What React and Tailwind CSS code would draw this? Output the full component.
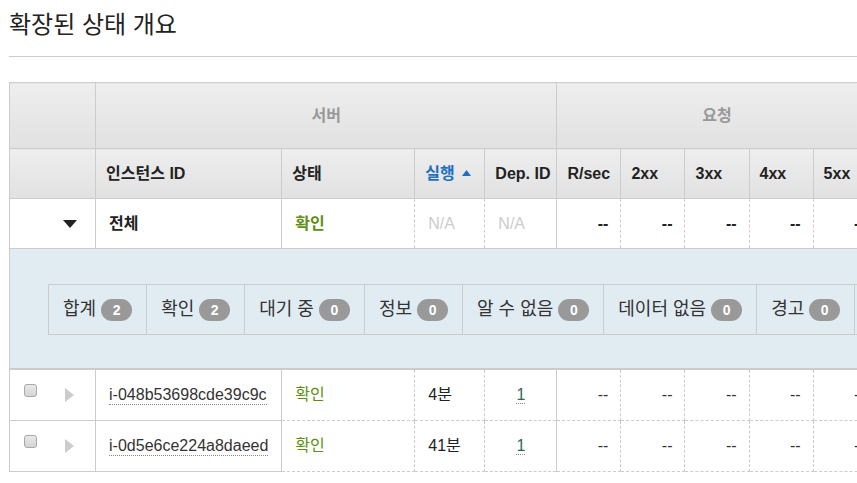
import React from "react";

const FONT = { fontFamily: '"Liberation Sans", "Noto Sans CJK KR", Arial, sans-serif' };

const reqCols = ["R/sec", "2xx", "3xx", "4xx", "5xx"];
const extraCols = ["P99.9", "P99", "P90", "P75"];

const summary = [
  ["합계", 2],
  ["확인", 2],
  ["대기 중", 0],
  ["정보", 0],
  ["알 수 없음", 0],
  ["데이터 없음", 0],
  ["경고", 0],
  ["성능 저하", 0],
  ["심각", 0],
];

const rows = [
  { id: "i-048b53698cde39c9c", up: "4분" },
  { id: "i-0d5e6ce224a8daeed", up: "41분" },
];

function Badge({ n }) {
  return (
    <span className="inline-flex h-[22px] w-[31px] items-center justify-center rounded-full bg-[#999999] text-[14px] font-bold leading-none text-white">
      {n}
    </span>
  );
}

function Checkbox() {
  return (
    <span className="inline-block h-[13px] w-[13px] rounded-[3px] border border-[#a9a9a9] bg-linear-to-b from-[#e9e9e9] to-[#d4d4d4]" />
  );
}

export default function App() {
  const thBase = "border border-[#cccccc] bg-linear-to-b from-[#eeeeee] to-[#e1e1e1] align-middle font-bold whitespace-nowrap";
  const th = thBase + " text-left px-[10px]";
  const thGroup = thBase + " text-center text-[#999999]";
  const dashed = "border-y border-y-[#cccccc] border-x border-x-[#cccccc] border-dashed whitespace-nowrap";
  return (
    <div className="w-full overflow-hidden bg-white text-[#222222]" style={FONT}>
      <div className="ml-[9px] border-b border-[#cccccc] pt-[8px] pb-[14px] text-[24px] leading-[34px] text-[#222222]">
        확장된 상태 개요
      </div>
      <div className="pl-[9px] pt-[25px]">
        <table className="table-fixed border-collapse text-[16px]" style={{ width: 1205 }}>
          <colgroup>
            <col style={{ width: 86 }} />
            <col style={{ width: 186 }} />
            <col style={{ width: 133 }} />
            <col style={{ width: 70 }} />
            <col style={{ width: 72 }} />
            {reqCols.map((c) => (
              <col key={c} style={{ width: 64 }} />
            ))}
            {extraCols.map((c) => (
              <col key={c} style={{ width: 84 }} />
            ))}
          </colgroup>
          <thead>
            <tr className="h-[66px]">
              <th className={thBase}></th>
              <th colSpan={4} className={thGroup}>
                서버
              </th>
              <th colSpan={5} className={thGroup}>
                요청
              </th>
              <th colSpan={4} className={thGroup}>
                지연 시간
              </th>
            </tr>
            <tr className="h-[50px]">
              <th className={thBase}></th>
              <th className={th}>인스턴스 ID</th>
              <th className={th}>상태</th>
              <th className={th + " text-[#1f6fbf]"}>
                <span className="inline-flex items-center gap-[7px]">
                  실행
                  <svg width="9" height="6" viewBox="0 0 9 6" className="mt-[-2px]">
                    <polygon points="0,6 4.5,0 9,6" fill="#1f6fbf" />
                  </svg>
                </span>
              </th>
              <th className={thBase + " text-left pl-[10px] pr-0"}>Dep. ID</th>
              {reqCols.map((c) => (
                <th key={c} className={th}>
                  {c}
                </th>
              ))}
              {extraCols.map((c) => (
                <th key={c} className={th}>
                  {c}
                </th>
              ))}
            </tr>
          </thead>
          <tbody>
            <tr className="h-[50px]">
              <td className="border border-[#cccccc] pr-[18px] text-right align-middle">
                <svg width="14" height="8" viewBox="0 0 14 8" className="ml-auto inline-block">
                  <polygon points="0,0 14,0 7,8" fill="#222222" />
                </svg>
              </td>
              <td className="border border-[#cccccc] px-[13px] font-bold">전체</td>
              <td className={dashed + " px-[13px] font-bold text-[#5f8f12]"}>확인</td>
              <td className={dashed + " px-[13px] text-[#cccccc]"}>N/A</td>
              <td className={dashed + " px-[13px] text-[#cccccc]"} style={{ borderRightStyle: "solid" }}>
                N/A
              </td>
              {reqCols.map((c) => (
                <td key={c} className={dashed + " pr-[12px] text-right font-bold"}>
                  --
                </td>
              ))}
              {extraCols.map((c) => (
                <td key={c} className={dashed + " pr-[12px] text-right font-bold"}>
                  --
                </td>
              ))}
            </tr>
            <tr>
              <td colSpan={14} className="border border-[#cccccc] border-b-2 border-b-[#cccccc] bg-[#e1ebf2] pt-[35px] pb-[33px] pl-[38px]">
                <div className="flex h-[51px]">
                  {summary.map(([label, n], i) => (
                    <div
                      key={label}
                      className={
                        "flex items-center gap-[5px] border-y border-r border-[#cccccc] px-[14px] text-[18px] text-[#333333] " +
                        (i === 0 ? "border-l" : "")
                      }
                    >
                      <span className="whitespace-nowrap">{label}</span>
                      <Badge n={n} />
                    </div>
                  ))}
                </div>
              </td>
            </tr>
            {rows.map((r) => (
              <tr key={r.id} className="h-[51px]">
                <td className="border border-[#cccccc] align-middle">
                  <div className="flex items-center">
                    <span className="ml-[14px] mt-[-8px] flex">
                      <Checkbox />
                    </span>
                    <svg width="9" height="14" viewBox="0 0 9 14" className="ml-[28px]">
                      <polygon points="0,0 9,7 0,14" fill="#cccccc" />
                    </svg>
                  </div>
                </td>
                <td className="whitespace-nowrap border border-[#cccccc] pl-[13px] pr-0">
                  <span className="border-b border-dotted border-[#888888] pb-[1px] text-[#333333]">{r.id}</span>
                </td>
                <td className={dashed + " px-[13px] text-[#5f8f12]"}>확인</td>
                <td className={dashed + " px-[13px] text-[#222222]"}>{r.up}</td>
                <td className={dashed + " text-center"} style={{ borderRightStyle: "solid" }}>
                  <span className="border-b border-dotted border-[#888888] text-[#2f6b4f]">1</span>
                </td>
                {reqCols.map((c) => (
                  <td key={c} className={dashed + " pr-[12px] text-right text-[#333333]"}>
                    --
                  </td>
                ))}
                {extraCols.map((c) => (
                  <td key={c} className={dashed + " pr-[12px] text-right text-[#333333]"}>
                    --
                  </td>
                ))}
              </tr>
            ))}
          </tbody>
        </table>
      </div>
    </div>
  );
}
